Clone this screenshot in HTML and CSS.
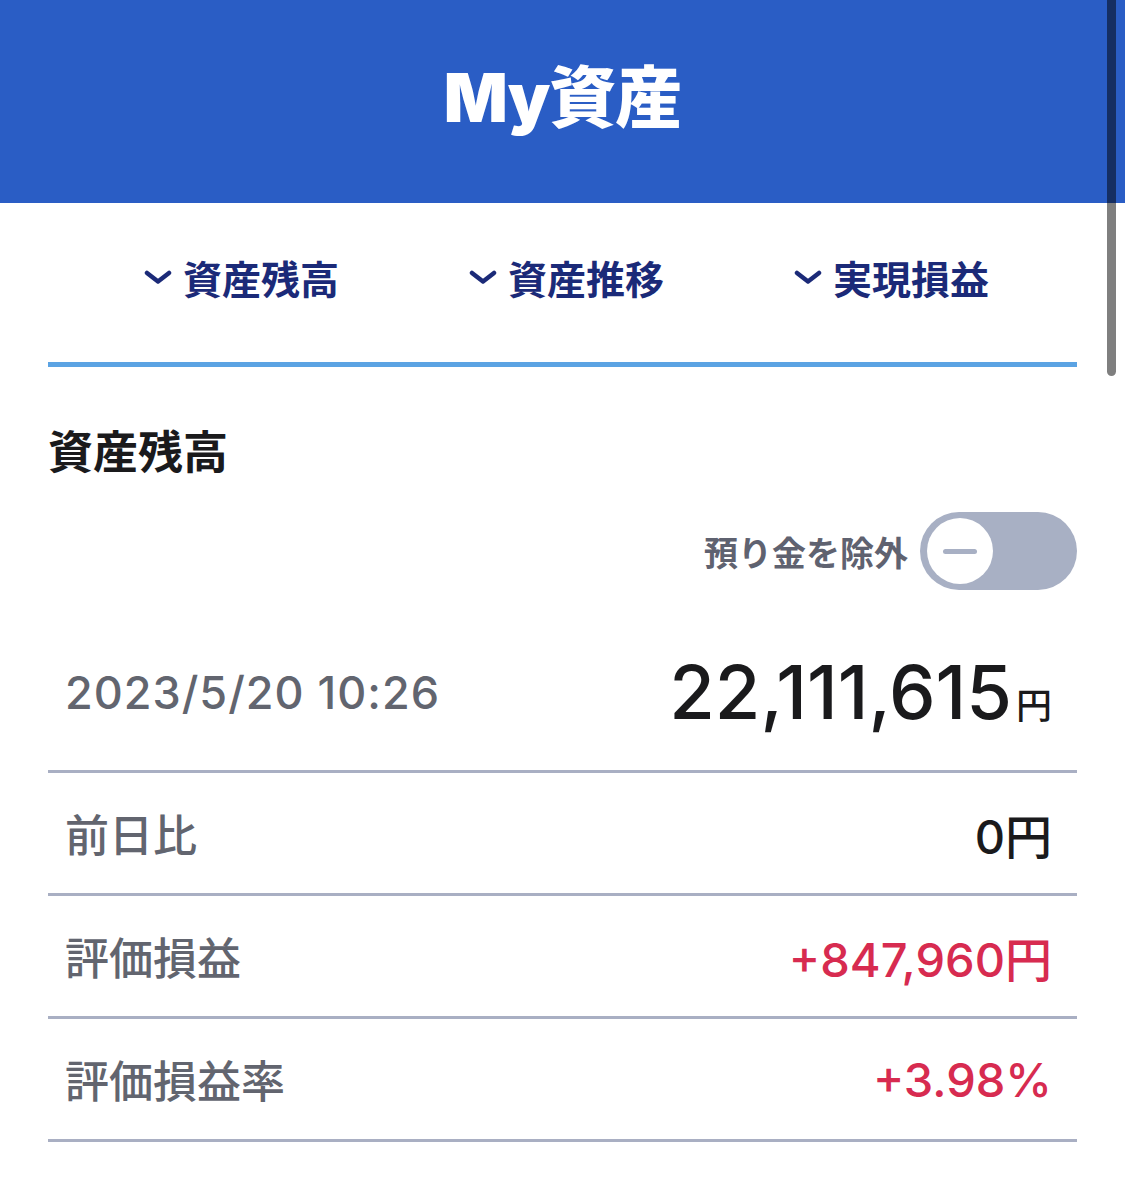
FILE: index.html
```html
<!DOCTYPE html>
<html lang="ja">
<head>
    <meta charset="UTF-8">
    <meta name="viewport" content="width=device-width, initial-scale=1.0">
    <title>My資産</title>
    <link rel="stylesheet" href="styles.css">
</head>
<body>

    <header class="app-header">
        <h1 class="app-title">My資産</h1>
    </header>

    <div class="scroll-indicator"></div>

    <main class="content">
        <nav class="tabs">
            <a class="tab" href="#balance">
                <svg class="chevron" viewBox="0 0 28 14"><path d="M3 3 L14 11.5 L25 3"/></svg>
                資産残高
            </a>
            <a class="tab" href="#history">
                <svg class="chevron" viewBox="0 0 28 14"><path d="M3 3 L14 11.5 L25 3"/></svg>
                資産推移
            </a>
            <a class="tab" href="#realized">
                <svg class="chevron" viewBox="0 0 28 14"><path d="M3 3 L14 11.5 L25 3"/></svg>
                実現損益
            </a>
        </nav>

        <section id="balance">
            <h2 class="section-title">資産残高</h2>

            <div class="toggle-row">
                <span class="toggle-label">預り金を除外</span>
                <div class="toggle">
                    <div class="toggle-knob"><span class="toggle-minus"></span></div>
                </div>
            </div>

            <div class="total-row">
                <span class="total-date">2023/5/20 10:26</span>
                <span class="total-value">22,111,615<span class="yen">円</span></span>
            </div>

            <div class="stat-row">
                <span class="stat-label">前日比</span>
                <span class="stat-value">0円</span>
            </div>
            <div class="stat-row">
                <span class="stat-label">評価損益</span>
                <span class="stat-value plus">+847,960円</span>
            </div>
            <div class="stat-row">
                <span class="stat-label">評価損益率</span>
                <span class="stat-value plus">+3.98%</span>
            </div>
        </section>
    </main>

</body>
</html>
```

FILE: styles.css
```css
body {
    font-family: Inter, "Noto Sans CJK JP", sans-serif;
    background-color: #fff;
    margin: 0;
    padding: 0;
    color: #1a1a1c;
}

.app-header {
    height: 203px;
    background-color: #2a5dc5;
    display: flex;
    justify-content: center;
    align-items: center;
}

.app-title {
    margin: 0;
    color: #fff;
    font-size: 67px;
    font-weight: 900;
    line-height: 1;
    letter-spacing: -1px;
    padding-bottom: 8px;
}

.scroll-indicator {
    position: absolute;
    top: 0;
    right: 9px;
    width: 9px;
    height: 376px;
    border-radius: 0 0 5px 5px;
    background-color: rgba(0, 0, 0, 0.5);
}

.content {
    padding: 0 48px;
}

.tabs {
    height: 164px;
    box-sizing: border-box;
    padding: 0 0 11px 8px;
    display: flex;
    justify-content: center;
    align-items: center;
    gap: 130px;
    border-bottom: 5px solid #5ba3e3;
}

.tab {
    display: flex;
    align-items: center;
    gap: 11px;
    color: #1b2a78;
    font-size: 39px;
    font-weight: 700;
    text-decoration: none;
}

.chevron {
    width: 28px;
    height: 14px;
    fill: none;
    stroke: #1b2a78;
    stroke-width: 4.5;
    stroke-linecap: round;
    stroke-linejoin: round;
}

.section-title {
    margin: 56px 0 0;
    font-size: 45px;
    font-weight: 700;
    line-height: 60px;
    color: #1a1a1c;
}

.toggle-row {
    margin-top: 29px;
    display: flex;
    justify-content: flex-end;
    align-items: center;
    gap: 12px;
}

.toggle-label {
    color: #5f6270;
    font-size: 34px;
    font-weight: 700;
}

.toggle {
    width: 157px;
    height: 78px;
    border-radius: 39px;
    background-color: #a8b0c4;
    padding: 6px 7px;
    box-sizing: border-box;
}

.toggle-knob {
    width: 66px;
    height: 66px;
    border-radius: 50%;
    background-color: #fff;
    display: flex;
    justify-content: center;
    align-items: center;
}

.toggle-minus {
    width: 34px;
    height: 5px;
    border-radius: 3px;
    background-color: #a8b0c4;
}

.total-row {
    height: 183px;
    box-sizing: border-box;
    padding: 24px 25px 0 17px;
    display: flex;
    justify-content: space-between;
    align-items: center;
    border-bottom: 3px solid #a9afc3;
}

.total-date {
    color: #62656f;
    font-size: 45px;
    font-weight: 500;
    letter-spacing: 1px;
}

.total-value {
    font-size: 74px;
    font-weight: 500;
    color: #1a1a1c;
}

.yen {
    font-size: 36px;
    margin-left: 4px;
}

.stat-row {
    height: 123px;
    box-sizing: border-box;
    padding: 0 25px 0 17px;
    display: flex;
    justify-content: space-between;
    align-items: center;
    border-bottom: 3px solid #a9afc3;
}

.stat-label {
    color: #62656f;
    font-size: 44px;
    font-weight: 500;
}

.stat-value {
    font-size: 47px;
    font-weight: 500;
    color: #1a1a1c;
}

.stat-value.plus {
    color: #d72b50;
}
```
